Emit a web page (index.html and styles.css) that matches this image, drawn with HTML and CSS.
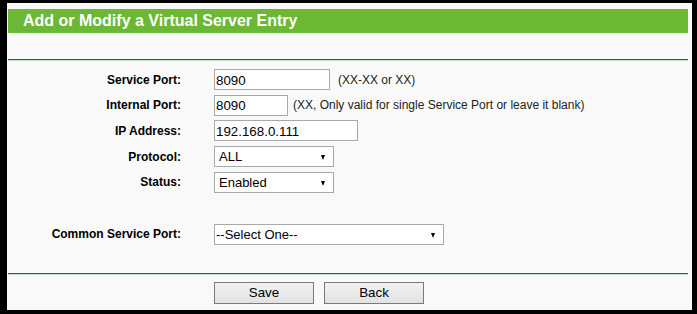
FILE: index.html
```html
<!DOCTYPE html>
<html>
<head>
<meta charset="utf-8">
<link rel="stylesheet" href="styles.css">
</head>
<body>
<div class="frame">
  <div class="title">Add or Modify a Virtual Server Entry</div>
  <div class="rule"></div>
  <form class="form">
    <div class="grid">
      <label class="lbl">Service Port:</label>
      <div class="field"><input class="inp w-svc" type="text" value="8090"><span class="hint hint-svc">(XX-XX or XX)</span></div>
      <label class="lbl">Internal Port:</label>
      <div class="field"><input class="inp w-int" type="text" value="8090"><span class="hint hint-int">(XX, Only valid for single Service Port or leave it blank)</span></div>
      <label class="lbl">IP Address:</label>
      <div class="field"><input class="inp w-ip" type="text" value="192.168.0.111"></div>
      <label class="lbl">Protocol:</label>
      <div class="field"><span class="sel w-sel">ALL</span></div>
      <label class="lbl">Status:</label>
      <div class="field"><span class="sel w-sel">Enabled</span></div>
    </div>
    <div class="grid common">
      <label class="lbl">Common Service Port:</label>
      <div class="field"><span class="sel w-common">--Select One--</span></div>
    </div>
  </form>
  <div class="rule rule-bottom"></div>
  <div class="buttons">
    <button class="btn" type="button">Save</button>
    <button class="btn" type="button">Back</button>
  </div>
</div>
</body>
</html>
```
FILE: styles.css
```css
html, body {
  margin: 0;
  padding: 0;
  background: #000;
}
body {
  padding: 3px 5px 4px 7px;
  font-family: "Liberation Sans", Arial, sans-serif;
}
.frame {
  background: #f9f9f9;
  height: 307px;
  padding: 6px 4px 0 1px;
  box-sizing: border-box;
}
.title {
  background: #6ab833;
  color: #fff;
  font-weight: bold;
  font-size: 16px;
  height: 24px;
  line-height: 23px;
  padding-left: 15px;
}
.rule {
  margin-top: 26px;
  height: 1px;
  background: #1f6b3f;
  border-bottom: 1px solid #bcdcc8;
}
.form {
  margin: 8px 0 0 0;
}
.grid {
  display: grid;
  grid-template-columns: 173px 1fr;
  column-gap: 33px;
  grid-auto-rows: 21px;
  row-gap: 4.7px;
  align-items: center;
}
.common {
  margin-top: 31px;
}
.lbl {
  text-align: right;
  font-weight: bold;
  font-size: 12px;
  color: #000;
}
.field {
  display: flex;
  align-items: center;
  height: 21px;
}
.inp {
  box-sizing: border-box;
  height: 21px;
  margin: 0;
  border: 1px solid #a9a9a9;
  background: #fff;
  padding: 1px 1px 0 1px;
  font-family: "Liberation Sans", Arial, sans-serif;
  font-size: 13.33px;
  color: #000;
  outline: none;
}
.w-svc { width: 116px; }
.w-int { width: 74px; }
.w-ip { width: 144px; }
.hint {
  font-size: 12px;
  color: #222;
}
.hint-svc { margin-left: 8px; }
.hint-int { margin-left: 5px; }
.sel {
  position: relative;
  box-sizing: border-box;
  display: flex;
  align-items: center;
  height: 21px;
  border: 1px solid #a9a9a9;
  background: #fff;
  padding-left: 4px;
  font-size: 13px;
  color: #000;
}
.sel::after {
  content: "";
  position: absolute;
  right: 8px;
  top: 8px;
  border-left: 2.5px solid transparent;
  border-right: 2.5px solid transparent;
  border-top: 5px solid #000;
}
.w-sel { width: 120px; }
.w-common { width: 230px; padding-left: 1px; }
.rule-bottom {
  margin-top: 28px;
}
.buttons {
  display: flex;
  gap: 10px;
  margin: 7px 0 0 206px;
}
.btn {
  box-sizing: border-box;
  width: 100px;
  height: 22px;
  margin: 0;
  padding: 0;
  border: 1px solid #7a7a7a;
  background: linear-gradient(#f2f2f2, #e2e2e2);
  font-family: "Liberation Sans", Arial, sans-serif;
  font-size: 13.33px;
  color: #000;
}
```
